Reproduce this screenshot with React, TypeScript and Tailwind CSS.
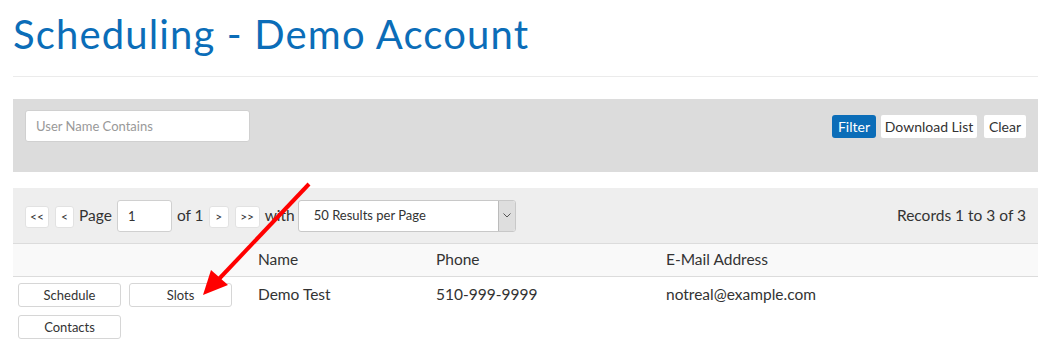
import React from "react";

function SmallBtn({ children, className = "" }: { children: React.ReactNode; className?: string }) {
  return (
    <button className={`h-[22px] rounded-[3px] border border-[#e2e2e2] bg-white text-[12px] leading-none text-[#333] ${className}`}>
      {children}
    </button>
  );
}

function RowBtn({ children }: { children: React.ReactNode }) {
  return (
    <button className="h-[24px] w-[103px] rounded-[3px] border border-[#d6d6d6] bg-white text-[13px] leading-none text-[#333]">
      {children}
    </button>
  );
}

export default function App() {
  return (
    <div className="relative h-[354px] w-[1048px] overflow-hidden bg-white font-['Lato','Liberation_Sans',sans-serif] text-[#333]">
      <div className="ml-[13px] mr-[10px]">
        <h1 className="pt-[11px] text-[40px] font-normal leading-[47px] tracking-[1.15px] text-[#0b6db8]">
          Scheduling - Demo Account
        </h1>
        <div className="mt-[18px] h-px bg-[#ebebeb]" />

        {/* filter panel */}
        <div className="mt-[22px] flex h-[73px] items-start justify-between bg-[#dcdcdc] pl-[12px] pr-[12px] pt-[11px]">
          <input
            placeholder="User Name Contains"
            className="h-[32px] w-[225px] rounded-[3px] border border-[#d0d0d0] bg-white px-[10px] text-[13px] text-[#333] placeholder:text-[#999] outline-none"
          />
          <div className="mt-[5px] flex">
            <button className="h-[23px] w-[44px] rounded-[3px] bg-[#0b6db8] text-[14px] text-white">Filter</button>
            <button className="ml-[5px] h-[23px] w-[96px] rounded-[2px] bg-white text-[14px] text-[#333]">Download List</button>
            <button className="ml-[7px] h-[23px] w-[42px] rounded-[2px] bg-white text-[14px] text-[#333]">Clear</button>
          </div>
        </div>

        {/* pagination */}
        <div className="mt-[16px] flex h-[56px] items-center justify-between border-b border-[#dcdcdc] bg-[#eeeeee] pl-[12px] pr-[12px]">
          <div className="flex items-center text-[15.5px]">
            <SmallBtn className="mt-[2px] w-[24px]">&lt;&lt;</SmallBtn>
            <SmallBtn className="ml-[6px] mt-[2px] w-[19px]">&lt;</SmallBtn>
            <span className="ml-[5px]">Page</span>
            <input
              defaultValue="1"
              className="ml-[5px] h-[32px] w-[55px] rounded-[3px] border border-[#d0d0d0] bg-white px-[10px] text-[13px] text-[#333] outline-none"
            />
            <span className="ml-[5px]">of 1</span>
            <SmallBtn className="ml-[5px] mt-[2px] w-[20px]">&gt;</SmallBtn>
            <SmallBtn className="ml-[6px] mt-[2px] w-[25px]">&gt;&gt;</SmallBtn>
            <span className="ml-[5px]">with</span>
            <div className="ml-[3px] flex h-[32px] w-[218px] overflow-hidden rounded-[3px] border border-[#c8c8c8] bg-white">
              <span className="flex flex-1 items-center pl-[15px] text-[13px] text-[#333]">50 Results per Page</span>
              <span className="flex w-[17px] items-center justify-center border-l border-[#bbb] bg-[#dedede]">
                <svg width="8" height="5" viewBox="0 0 8 5" fill="none">
                  <path d="M0.5 0.5 L4 4 L7.5 0.5" stroke="#555" strokeWidth="1" />
                </svg>
              </span>
            </div>
          </div>
          <span className="text-[15.5px]">Records 1 to 3 of 3</span>
        </div>

        {/* table */}
        <div className="flex h-[33px] items-center border-b border-[#dcdcdc] bg-[#f9f9f9] text-[15.5px]">
          <span className="ml-[245px] w-[178px]">Name</span>
          <span className="w-[230px]">Phone</span>
          <span>E-Mail Address</span>
        </div>
        <div className="flex pt-[6px] text-[15.5px]">
          <div className="ml-[5px] flex w-[240px] flex-col gap-[8px]">
            <div className="flex gap-[8px]">
              <RowBtn>Schedule</RowBtn>
              <RowBtn>Slots</RowBtn>
            </div>
            <RowBtn>Contacts</RowBtn>
          </div>
          <span className="w-[178px]">Demo Test</span>
          <span className="w-[230px]">510-999-9999</span>
          <span>notreal@example.com</span>
        </div>
      </div>

      {/* annotation arrow */}
      <svg className="pointer-events-none absolute left-0 top-0" width="1048" height="354">
        <line x1="309" y1="184" x2="218" y2="280" stroke="#f00" strokeWidth="4" />
        <polygon points="203,295 211,270 228,285" fill="#f00" />
      </svg>
    </div>
  );
}
